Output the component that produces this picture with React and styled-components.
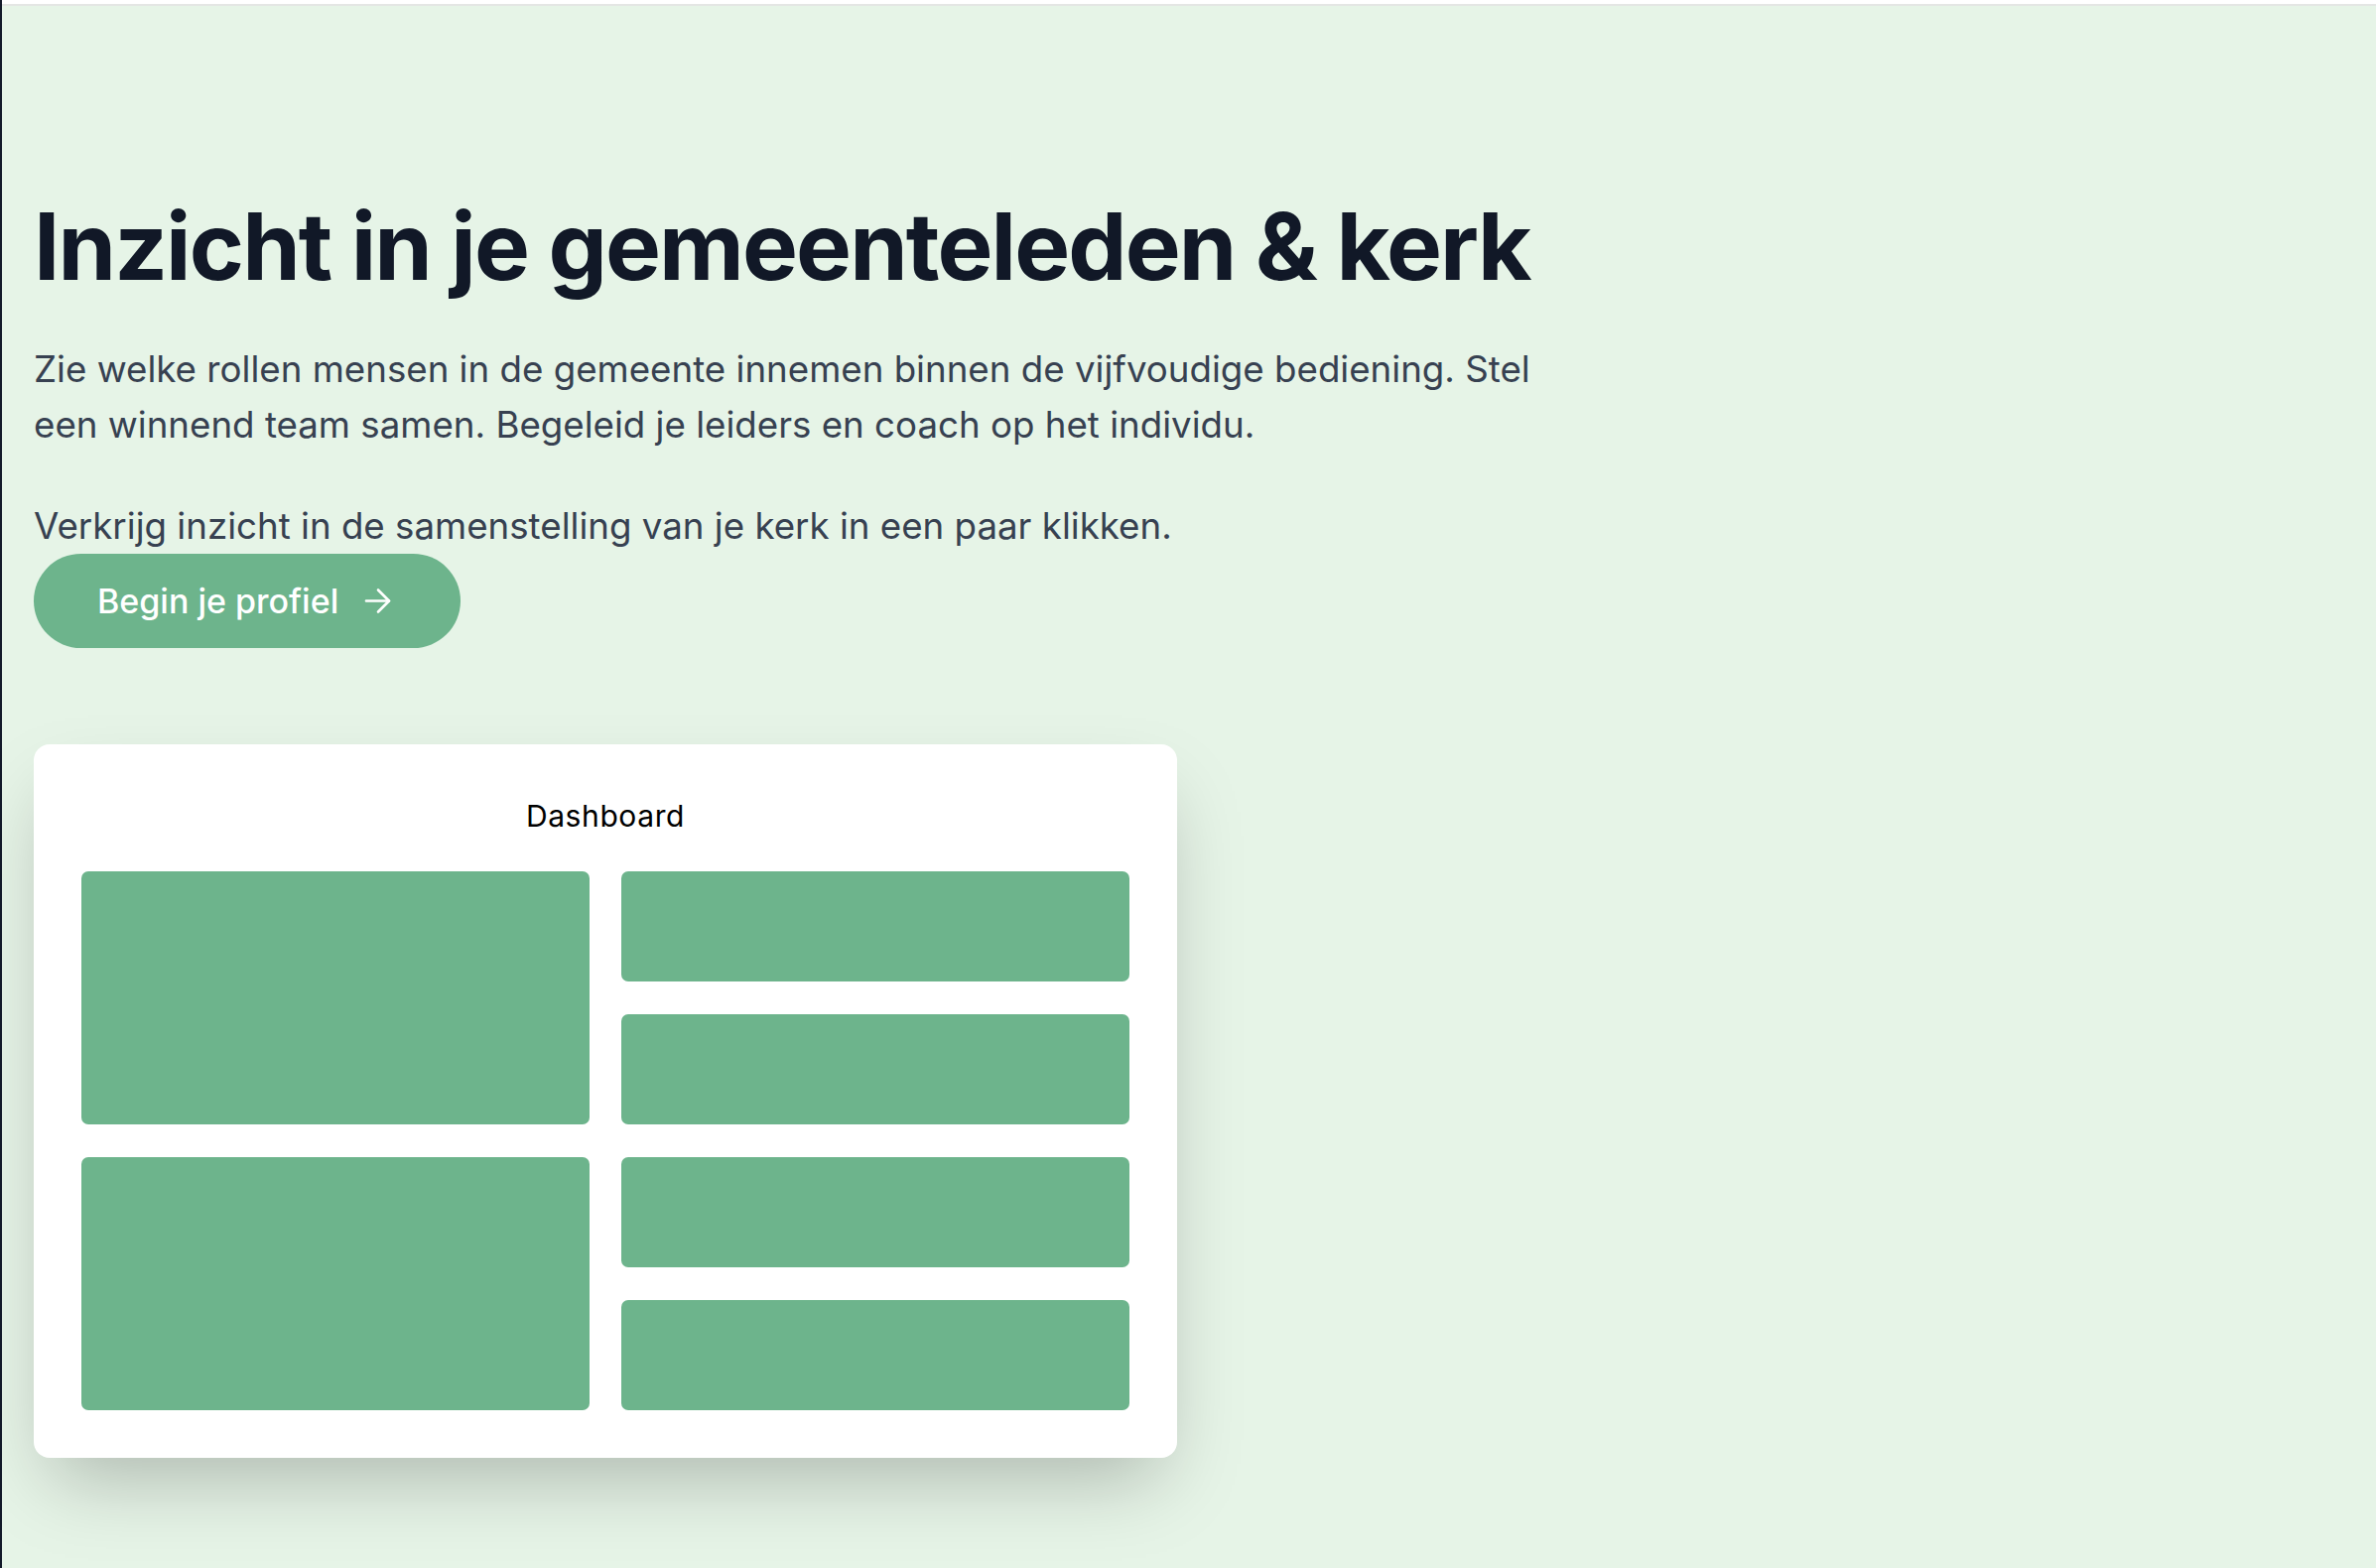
import React from 'react'
import styled, { createGlobalStyle } from 'styled-components'

const GlobalStyle = createGlobalStyle`
  * { box-sizing: border-box; }
  html, body {
    margin: 0;
    padding: 0;
    background: #e6f4e7;
    font-family: Inter, "Noto Sans", sans-serif;
  }
`

export default function App() {
    return (
        <>
            <GlobalStyle />
            <Page>
                <Rail />
                <Main>
                    <TopBar />
                    <Hero>
                        <Title>Inzicht in je gemeenteleden &amp; kerk</Title>
                        <Lead>
                            Zie welke rollen mensen in de gemeente innemen binnen de vijfvoudige bediening. Stel
                            een winnend team samen. Begeleid je leiders en coach op het individu.
                        </Lead>
                        <Lead tight>Verkrijg inzicht in de samenstelling van je kerk in een paar klikken.</Lead>
                        <CtaButton>
                            Begin je profiel
                            <svg width="27" height="27" viewBox="0 0 27 27" fill="none" stroke="currentColor" strokeWidth="2.6" strokeLinecap="round" strokeLinejoin="round">
                                <path d="M2 13.5h23" />
                                <path d="M14 2.5l11 11-11 11" />
                            </svg>
                        </CtaButton>
                        <Card>
                            <CardTitle>Dashboard</CardTitle>
                            <TileGrid>
                                <Tile big />
                                <Tile />
                                <Tile />
                                <Tile big />
                                <Tile />
                                <Tile />
                            </TileGrid>
                        </Card>
                    </Hero>
                </Main>
            </Page>
        </>
    )
}

const Page = styled.div`
    display: flex;
    min-height: 100vh;
    background: #e6f4e7;`
const Rail = styled.div`
    width: 2px;
    flex-shrink: 0;
    background: #131a2a;`
const Main = styled.div`
    flex: 1;
    display: flex;
    flex-direction: column;`
const TopBar = styled.div`
    height: 6px;
    background: #fff;
    border-bottom: 2px solid #e4e6e4;`
const Hero = styled.section`
    padding: 195px 32px 80px;
    display: flex;
    flex-direction: column;
    align-items: flex-start;`
const Title = styled.h1`
    margin: 0 0 49px;
    font-size: 94px;
    line-height: 94px;
    font-weight: 700;
    letter-spacing: -0.02em;
    color: #111827;
    white-space: nowrap;`
const Lead = styled.p`
    margin: 0 0 ${p => (p.tight ? '0' : '46px')};
    max-width: 1540px;
    font-size: 36.7px;
    line-height: 56px;
    color: #374151;`
const CtaButton = styled.button`
    display: inline-flex;
    align-items: center;
    gap: 26px;
    height: 95px;
    padding: 0 70px 0 64px;
    border: none;
    border-radius: 999px;
    background: #6db48c;
    color: #fff;
    font-family: Inter, "Noto Sans", sans-serif;
    font-size: 34px;
    font-weight: 500;
    cursor: pointer;
    svg { flex-shrink: 0; }`
const Card = styled.div`
    margin-top: 97px;
    width: 1152px;
    padding: 48px;
    background: #fff;
    border-radius: 16px;
    box-shadow: 0 37px 75px -18px rgba(0, 0, 0, 0.25);`
const CardTitle = styled.h3`
    margin: 0 0 32px;
    text-align: center;
    font-size: 30px;
    line-height: 48px;
    font-weight: 400;
    letter-spacing: 0.02em;
    color: #000;`
const TileGrid = styled.div`
    display: grid;
    grid-template-columns: 1fr 1fr;
    grid-auto-rows: 111px;
    column-gap: 32px;
    row-gap: 33px;
    grid-auto-flow: dense;`
const Tile = styled.div`
    grid-column: ${p => (p.big ? '1' : '2')};
    grid-row-end: ${p => (p.big ? 'span 2' : 'span 1')};
    background: #6db48c;
    border-radius: 7px;`
